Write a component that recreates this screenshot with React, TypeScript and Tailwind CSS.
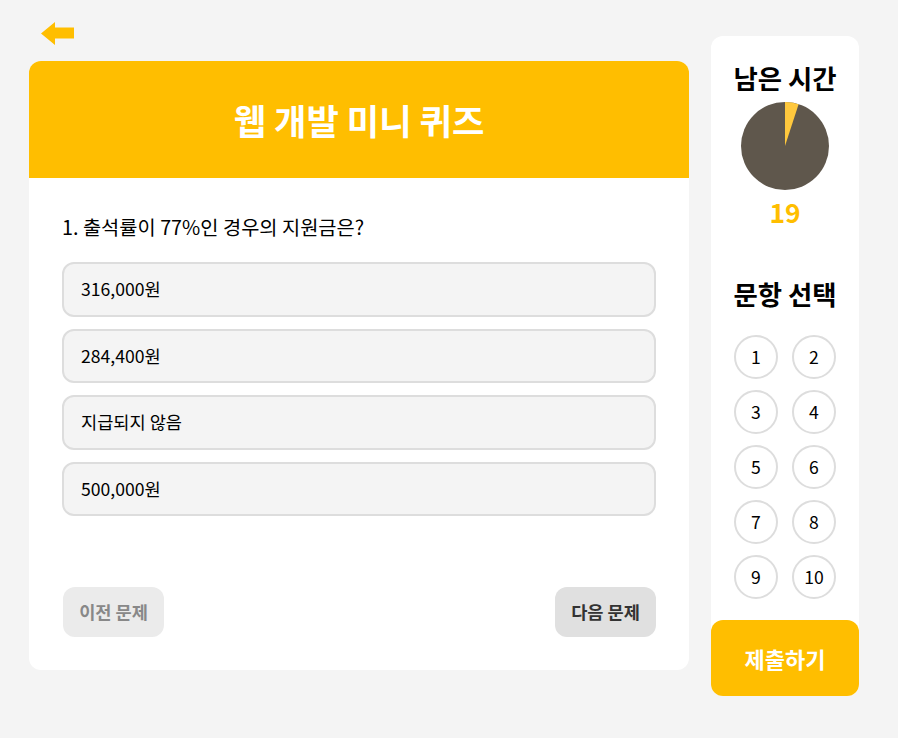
const options = ["316,000원", "284,400원", "지급되지 않음", "500,000원"];
const numbers = [1, 2, 3, 4, 5, 6, 7, 8, 9, 10];

function BackArrow() {
  return (
    <svg width="33" height="24" viewBox="0 0 33 24" className="ml-[12px]">
      <polygon
        points="0,11.5 14,0 14,5.5 33,5.5 33,16.5 14,16.5 14,23"
        fill="#ffbe00"
      />
    </svg>
  );
}

function TimerPie() {
  // 경과 시간 조각 (20초 중 1초)
  return (
    <svg width="88" height="88" viewBox="0 0 88 88">
      <circle cx="44" cy="44" r="44" fill="#5f574c" />
      <path d="M44 44 L44 0 A44 44 0 0 1 57.6 2.15 Z" fill="#ffc83d" />
    </svg>
  );
}

export default function App() {
  return (
    <div
      className="w-[898px] h-[738px] bg-[#f4f4f4] flex gap-[22px] px-[29px] text-black"
      style={{ fontFamily: '"Noto Sans CJK KR", "Noto Sans", sans-serif' }}
    >
      {/* 퀴즈 영역 */}
      <div className="flex flex-col pt-[22px]">
        <BackArrow />
        <div className="mt-[15px] w-[660px] h-[609px] bg-white rounded-[12px] overflow-hidden flex flex-col">
          <div className="h-[117px] bg-[#ffbe00] flex items-center justify-center">
            <h1 className="text-[35.2px] font-bold text-white leading-none">웹 개발 미니 퀴즈</h1>
          </div>
          <div className="flex-1 flex flex-col px-[33px] pt-[35px] pb-[33px]">
            <p className="text-[19.8px] leading-[27px]">1. 출석률이 77%인 경우의 지원금은?</p>
            <div className="mt-[22px] flex flex-col gap-[12px]">
              {options.map((o) => (
                <div
                  key={o}
                  className="h-[54.5px] flex items-center px-[17px] bg-[#f4f4f4] border-2 border-[#dddddd] rounded-[12px] text-[17.6px]"
                >
                  {o}
                </div>
              ))}
            </div>
            <div className="mt-auto flex justify-between pl-px">
              <button className="w-[101px] h-[50px] rounded-[12px] bg-[#ebebeb] text-[#888888] text-[17.6px] font-bold">
                이전 문제
              </button>
              <button className="w-[101px] h-[50px] rounded-[12px] bg-[#e0e0e0] text-[#333333] text-[17.6px] font-bold">
                다음 문제
              </button>
            </div>
          </div>
        </div>
      </div>

      {/* 사이드 패널 */}
      <div className="mt-[36px] w-[148px] h-[660px] bg-white rounded-[12px] flex flex-col items-center pt-[24px]">
        <h2 className="text-[26.4px] leading-[36px] font-bold">남은 시간</h2>
        <div className="mt-[6px]">
          <TimerPie />
        </div>
        <div className="mt-[4px] text-[26.4px] leading-[36px] font-bold text-[#ffbe00]">19</div>
        <h2 className="mt-[46px] text-[26.4px] leading-[36px] font-bold">문항 선택</h2>
        <div className="mt-[23px] grid grid-cols-[44px_44px] gap-x-[14px] gap-y-[11px]">
          {numbers.map((n) => (
            <button
              key={n}
              className="w-[44px] h-[44px] rounded-full border-2 border-[#dddddd] bg-white flex items-center justify-center text-[17.6px]"
            >
              {n}
            </button>
          ))}
        </div>
        <button className="mt-auto w-full h-[76px] rounded-[12px] bg-[#ffbe00] text-white text-[22px] font-bold">
          제출하기
        </button>
      </div>
    </div>
  );
}
